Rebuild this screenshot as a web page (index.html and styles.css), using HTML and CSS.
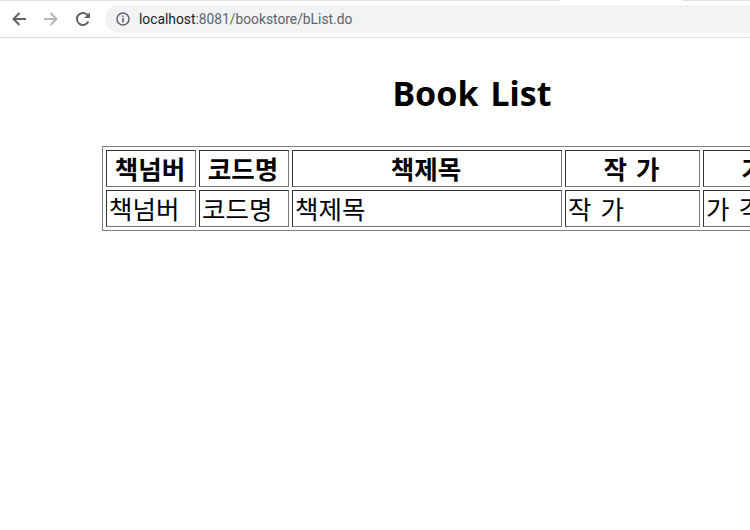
FILE: index.html
```html
<!DOCTYPE html>
<html lang="ko">

<head>
    <meta charset="UTF-8">
    <meta name="viewport" content="width=device-width, initial-scale=1.0">
    <title>Book List</title>
    <link rel="stylesheet" href="styles.css">
</head>

<body>
    <div class="tabstrip">
        <div class="tab-edge"></div>
        <div class="tab-active"></div>
        <div class="tab-rest"></div>
    </div>
    <div class="toolbar">
        <div class="navs">
            <svg class="nav" viewBox="0 0 16 16"><path d="M15 8H3M8.5 2L2.5 8l6 6" fill="none" stroke="#5f6368" stroke-width="2"/></svg>
            <svg class="nav" viewBox="0 0 16 16"><path d="M1 8h12M7.5 2l6 6-6 6" fill="none" stroke="#b4b6b9" stroke-width="2"/></svg>
            <svg class="nav" viewBox="0 0 16 16"><path d="M13.4 10.4A6 6 0 1 1 12.8 4.4" fill="none" stroke="#5f6368" stroke-width="2"/><path d="M15 1.2v5.8H9.2z" fill="#5f6368"/></svg>
        </div>
        <div class="address">
            <svg class="info" viewBox="0 0 14 14"><circle cx="7" cy="7" r="6" fill="none" stroke="#5f6368" stroke-width="1.5"/><path d="M6.2 6h1.6v4.4H6.2zM6.2 3.4h1.6V5H6.2z" fill="#5f6368"/></svg>
            <span class="host">localhost</span><span class="path">:8081/bookstore/bList.do</span>
        </div>
    </div>

    <div class="content">
        <h1>Book List</h1>
        <table>
            <tr>
                <th class="no">책넘버</th>
                <th class="code">코드명</th>
                <th class="name">책제목</th>
                <th class="writer">작 가</th>
                <th class="price">가 격</th>
            </tr>
            <tr>
                <td>책넘버</td>
                <td>코드명</td>
                <td>책제목</td>
                <td>작 가</td>
                <td>가 격</td>
            </tr>
        </table>
    </div>
</body>

</html>
```

FILE: styles.css
```css
* {
    margin: 0;
    padding: 0;
    box-sizing: border-box;
}

body {
    width: 750px;
    height: 530px;
    overflow: hidden;
    background-color: #fff;
    font-family: "Noto Sans CJK KR", "Noto Sans", sans-serif;
    color: #000;
}

.tabstrip {
    display: flex;
    height: 1px;
}

.tab-edge {
    width: 560px;
    background-color: #dee1e6;
}

.tab-active {
    width: 122px;
}

.tab-rest {
    flex: 1;
    background-color: #dee1e6;
}

.toolbar {
    display: flex;
    align-items: center;
    height: 37px;
    padding: 0 0 1px 11px;
    border-bottom: 1px solid #dadce0;
}

.navs {
    display: flex;
    gap: 16px;
    margin-right: 14px;
}

.nav {
    width: 16px;
    height: 16px;
}

.address {
    display: flex;
    align-items: center;
    flex: 1;
    height: 28px;
    padding-left: 11px;
    border-radius: 14px 0 0 14px;
    background-color: #f1f3f4;
    font-family: "Roboto", sans-serif;
    font-size: 13.8px;
}

.info {
    width: 14px;
    height: 14px;
    margin-right: 9px;
}

.host {
    color: #202124;
}

.path {
    color: #5f6368;
}

.content {
    padding-left: 102px;
}

h1 {
    width: 740px;
    margin-top: 27px;
    font-family: "Noto Sans", sans-serif;
    font-size: 34px;
    line-height: 56px;
    word-spacing: 3px;
    text-align: center;
    font-weight: bold;
}

table {
    width: 739px;
    margin-top: 25px;
    border: 1px solid #808080;
    border-spacing: 3px;
    table-layout: fixed;
    font-size: 25.5px;
    word-spacing: 2px;
}

th, td {
    height: 37px;
    border: 1px solid #333;
    border-right-color: #777;
    border-bottom-color: #777;
    padding: 0 2px 2px 0;
    line-height: 31px;
    overflow: hidden;
}

td {
    padding: 0 1px 2px 2px;
    text-align: left;
}

.no, .code {
    width: 90px;
}

.name {
    width: 270px;
}

.writer, .price {
    width: 135px;
}
```
